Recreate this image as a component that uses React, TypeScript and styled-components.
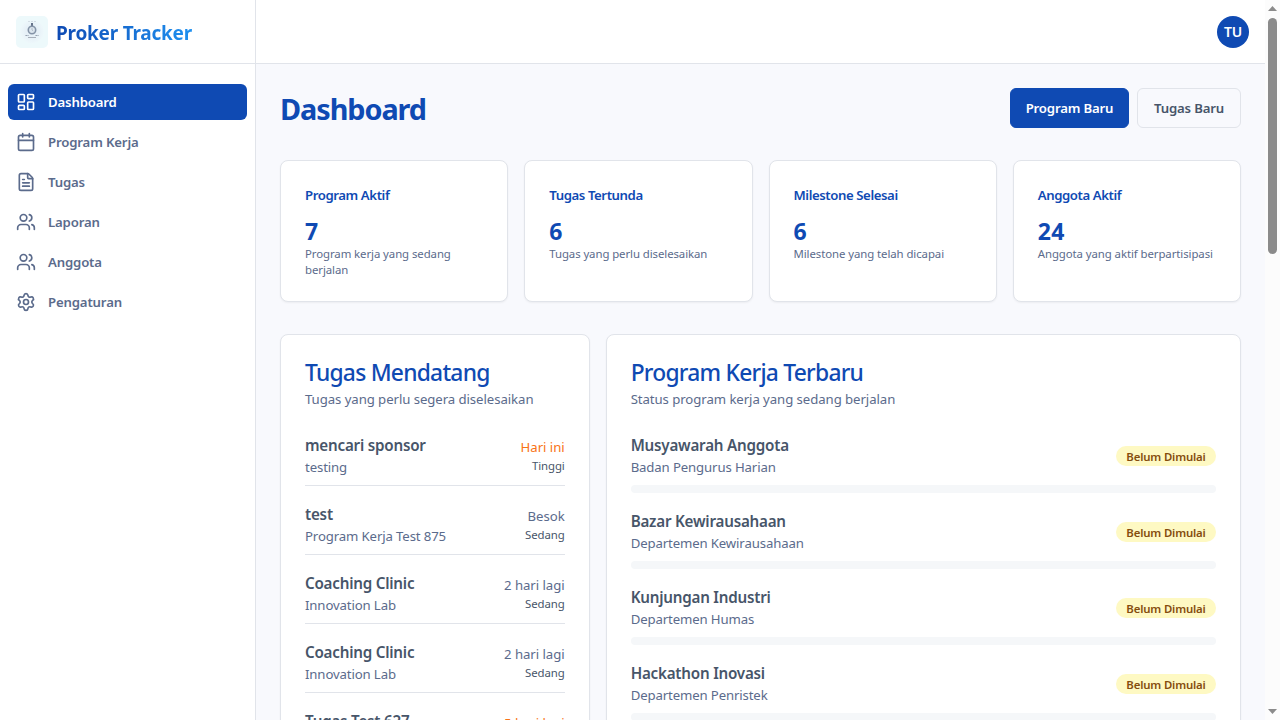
import React from "react";
import styled, { createGlobalStyle } from "styled-components";
import { LayoutDashboard, Calendar, FileText, Users, Settings } from "lucide-react";

const blue = "#0f4ab3";
const slate = "#5b6b8c";
const ink = "#475569";
const line = "#e1e4ea";

const Global = createGlobalStyle`
  *, *::before, *::after { box-sizing: border-box; }
  body { margin: 0; overflow: hidden; }
  h1, h2, h3, p { margin: 0; }
  button { font: inherit; }
`;

const Page = styled.div`
  display: grid;
  grid-template-columns: 256px minmax(0, 1fr) 15px;
  height: 720px;
  overflow: hidden;
  background: #f8f9fd;
  color: ${ink};
  font-family: "Noto Sans", sans-serif;
  font-size: 13.2px;
  line-height: 20px;
`;

const Sidebar = styled.aside`
  background: #fff;
  border-right: 1px solid ${line};
`;

const Brand = styled.div`
  display: flex;
  align-items: center;
  gap: 8px;
  height: 64px;
  padding: 0 16px;
  border-bottom: 1px solid ${line};
`;

const BrandName = styled.span`
  font-size: 19px;
  line-height: 28px;
  font-weight: 700;
  letter-spacing: -0.24px;
  white-space: nowrap;
  padding-top: 2px;
  background: linear-gradient(90deg, #0f4ab3, #1e90f0);
  background-clip: text;
  -webkit-background-clip: text;
  color: transparent;
`;

const Nav = styled.nav`
  display: flex;
  flex-direction: column;
  gap: 4px;
  padding: 20px 8px;
`;

const NavItem = styled.a<{ $active?: boolean }>`
  display: flex;
  align-items: center;
  gap: 12px;
  height: 36px;
  padding: 0 8px;
  border-radius: 6px;
  font-weight: 600;
  letter-spacing: -0.16px;
  color: ${(p) => (p.$active ? "#fff" : slate)};
  background: ${(p) => (p.$active ? blue : "transparent")};
`;

const Main = styled.main`
  min-width: 0;
  overflow: hidden;
`;

const TopBar = styled.header`
  display: flex;
  align-items: center;
  justify-content: flex-end;
  height: 64px;
  padding: 0 16px;
  background: #fff;
  border-bottom: 1px solid ${line};
`;

const Avatar = styled.div`
  display: grid;
  place-items: center;
  width: 32px;
  height: 32px;
  border-radius: 50%;
  background: ${blue};
  color: #fff;
  font-size: 14px;
  font-weight: 600;
  letter-spacing: -0.2px;
`;

const Content = styled.div`
  display: flex;
  flex-direction: column;
  gap: 32px;
  padding: 24px;
`;

const TitleRow = styled.div`
  display: flex;
  align-items: center;
  justify-content: space-between;
  height: 40px;
`;

const PageTitle = styled.h1`
  font-size: 28.8px;
  line-height: 36px;
  font-weight: 700;
  letter-spacing: -1.05px;
  padding-top: 1px;
  color: ${blue};
`;

const Actions = styled.div`
  display: flex;
  gap: 8px;
`;

const Button = styled.button<{ $primary?: boolean }>`
  width: ${(p) => (p.$primary ? 119 : 104)}px;
  height: 40px;
  padding: 0;
  border-radius: 6px;
  border: 1px solid ${(p) => (p.$primary ? blue : line)};
  background: ${(p) => (p.$primary ? blue : "#f8f9fd")};
  color: ${(p) => (p.$primary ? "#fff" : ink)};
  font-weight: 600;
  letter-spacing: -0.17px;
`;

const Card = styled.section`
  padding: 24px;
  background: #fff;
  border: 1px solid ${line};
  border-radius: 8px;
  box-shadow: 0 1px 2px rgba(0, 0, 0, 0.05);
`;

const Stats = styled.div`
  display: grid;
  grid-template-columns: repeat(4, minmax(0, 1fr));
  gap: 16px;
`;

const StatTitle = styled.h3`
  font-size: 13.2px;
  line-height: 20px;
  font-weight: 600;
  letter-spacing: -0.42px;
  color: ${blue};
`;

const StatValue = styled.div`
  margin-top: 8px;
  font-size: 23px;
  line-height: 32px;
  padding-top: 2px;
  height: 33px;
  font-weight: 700;
  letter-spacing: 0.4px;
  color: ${blue};
`;

const StatNote = styled.p`
  margin-bottom: -1px;
  font-size: 11.4px;
  line-height: 16px;
  letter-spacing: -0.08px;
  color: ${slate};
`;

const Panels = styled.div`
  display: grid;
  grid-template-columns: 309.67px minmax(0, 1fr);
  gap: 16px;
`;

const PanelTitle = styled.h2`
  font-size: 22.8px;
  line-height: 24px;
  padding-top: 2px;
  height: 24px;
  font-weight: 500;
  letter-spacing: -0.75px;
  white-space: nowrap;
  color: ${blue};
`;

const PanelNote = styled.p`
  margin-top: 6px;
  letter-spacing: -0.07px;
  color: ${slate};
`;

const List = styled.div`
  display: flex;
  flex-direction: column;
  gap: 16px;
  margin-top: 24px;
`;

const Entry = styled.div<{ $ruled?: boolean }>`
  display: flex;
  align-items: center;
  justify-content: space-between;
  padding-bottom: ${(p) => (p.$ruled ? 8 : 0)}px;
  border-bottom: ${(p) => (p.$ruled ? `1px solid ${line}` : "none")};
`;

const EntryName = styled.p`
  font-size: 15.2px;
  line-height: 24px;
  font-weight: 600;
  letter-spacing: -0.22px;
`;

const EntryOwner = styled.p`
  letter-spacing: -0.13px;
  color: ${slate};
`;

const Due = styled.div`
  text-align: right;
`;

const DueDate = styled.p<{ $soon?: boolean }>`
  letter-spacing: -0.04px;
  color: ${(p) => (p.$soon ? "#f97316" : slate)};
`;

const Priority = styled.p`
  height: 16px;
  padding-top: 1px;
  font-size: 11.4px;
  line-height: 16px;
  letter-spacing: -0.09px;
`;

const Badge = styled.span`
  display: flex;
  align-items: center;
  justify-content: center;
  width: 100px;
  height: 20px;
  margin-top: 2px;
  padding-top: 1px;
  border-radius: 10px;
  background: #fef9c3;
  color: #854d0e;
  font-size: 11.4px;
  line-height: 16px;
  font-weight: 600;
  letter-spacing: -0.16px;
`;

const Progress = styled.div`
  height: 8px;
  margin-top: 8px;
  border-radius: 4px;
  background: #f5f7f9;
`;

const ScrollTrack = styled.div`
  display: flex;
  flex-direction: column;
  align-items: center;
  justify-content: space-between;
  padding: 6px 0;
  background: #fcfcfc;
`;

const ScrollThumb = styled.div`
  width: 9px;
  height: 236px;
  margin: 7px 0 auto;
  border-radius: 5px;
  background: #8b8b8b;
`;

const Arrow = styled.i<{ $down?: boolean }>`
  width: 9px;
  height: 5px;
  background: #8b8b8b;
  clip-path: ${(p) => (p.$down ? "polygon(0 0, 100% 0, 50% 100%)" : "polygon(50% 0, 100% 100%, 0 100%)")};
`;

const Logo = () => (
  <svg width="32" height="32" viewBox="0 0 32 32">
    <defs>
      <radialGradient id="halo">
        <stop offset="0.5" stopColor="#e6f0f7" />
        <stop offset="1" stopColor="#eef8fb" />
      </radialGradient>
    </defs>
    <rect width="32" height="32" rx="5" fill="#edf9fb" />
    <circle cx="16" cy="15.5" r="12" fill="url(#halo)" />
    <path d="M12 5.5h8" stroke="#d3dde4" strokeDasharray="2 1" />
    <path d="M16 7v4" stroke="#65738a" strokeWidth="2" />
    <circle cx="16" cy="14" r="3.7" fill="#dce6ee" stroke="#8493a7" strokeWidth="1.6" />
    <path d="M16 12v2l1.2 1" fill="none" stroke="#a7b3c1" strokeWidth="0.8" />
    <path d="M9.5 19.5h3M19.5 19.5h3" stroke="#8d99a8" strokeDasharray="1.4 .6" />
    <path d="M12 21.5h8" stroke="#a7afba" strokeWidth="1" />
  </svg>
);

const navItems = [
  { label: "Dashboard", Icon: LayoutDashboard },
  { label: "Program Kerja", Icon: Calendar },
  { label: "Tugas", Icon: FileText },
  { label: "Laporan", Icon: Users },
  { label: "Anggota", Icon: Users },
  { label: "Pengaturan", Icon: Settings },
];

const stats = [
  ["Program Aktif", "7", "Program kerja yang sedang berjalan"],
  ["Tugas Tertunda", "6", "Tugas yang perlu diselesaikan"],
  ["Milestone Selesai", "6", "Milestone yang telah dicapai"],
  ["Anggota Aktif", "24", "Anggota yang aktif berpartisipasi"],
];

const tasks = [
  { name: "mencari sponsor", program: "testing", due: "Hari ini", priority: "Tinggi", soon: true },
  { name: "test", program: "Program Kerja Test 875", due: "Besok", priority: "Sedang" },
  { name: "Coaching Clinic", program: "Innovation Lab", due: "2 hari lagi", priority: "Sedang" },
  { name: "Coaching Clinic", program: "Innovation Lab", due: "2 hari lagi", priority: "Sedang" },
  { name: "Tugas Test 627", program: "Program Kerja Test 875", due: "5 hari lagi", priority: "Tinggi", soon: true },
];

const programs = [
  ["Musyawarah Anggota", "Badan Pengurus Harian"],
  ["Bazar Kewirausahaan", "Departemen Kewirausahaan"],
  ["Kunjungan Industri", "Departemen Humas"],
  ["Hackathon Inovasi", "Departemen Penristek"],
];

export default function App() {
  return (
    <Page>
      <Global />
      <Sidebar>
        <Brand>
          <Logo />
          <BrandName>Proker Tracker</BrandName>
        </Brand>
        <Nav>
          {navItems.map(({ label, Icon }, i) => (
            <NavItem key={label} $active={i === 0}>
              <Icon size={20} />
              {label}
            </NavItem>
          ))}
        </Nav>
      </Sidebar>
      <Main>
        <TopBar>
          <Avatar>TU</Avatar>
        </TopBar>
        <Content>
          <TitleRow>
            <PageTitle>Dashboard</PageTitle>
            <Actions>
              <Button $primary>Program Baru</Button>
              <Button>Tugas Baru</Button>
            </Actions>
          </TitleRow>
          <Stats>
            {stats.map(([title, value, note]) => (
              <Card key={title}>
                <StatTitle>{title}</StatTitle>
                <StatValue>{value}</StatValue>
                <StatNote>{note}</StatNote>
              </Card>
            ))}
          </Stats>
          <Panels>
            <Card>
              <PanelTitle>Tugas Mendatang</PanelTitle>
              <PanelNote>Tugas yang perlu segera diselesaikan</PanelNote>
              <List>
                {tasks.map((t, i) => (
                  <Entry key={i} $ruled>
                    <div>
                      <EntryName>{t.name}</EntryName>
                      <EntryOwner>{t.program}</EntryOwner>
                    </div>
                    <Due>
                      <DueDate $soon={t.soon}>{t.due}</DueDate>
                      <Priority>{t.priority}</Priority>
                    </Due>
                  </Entry>
                ))}
              </List>
            </Card>
            <Card>
              <PanelTitle>Program Kerja Terbaru</PanelTitle>
              <PanelNote>Status program kerja yang sedang berjalan</PanelNote>
              <List>
                {programs.map(([name, owner]) => (
                  <div key={name}>
                    <Entry>
                      <div>
                        <EntryName>{name}</EntryName>
                        <EntryOwner>{owner}</EntryOwner>
                      </div>
                      <Badge>Belum Dimulai</Badge>
                    </Entry>
                    <Progress />
                  </div>
                ))}
              </List>
            </Card>
          </Panels>
        </Content>
      </Main>
      <ScrollTrack>
        <Arrow />
        <ScrollThumb />
        <Arrow $down />
      </ScrollTrack>
    </Page>
  );
}
